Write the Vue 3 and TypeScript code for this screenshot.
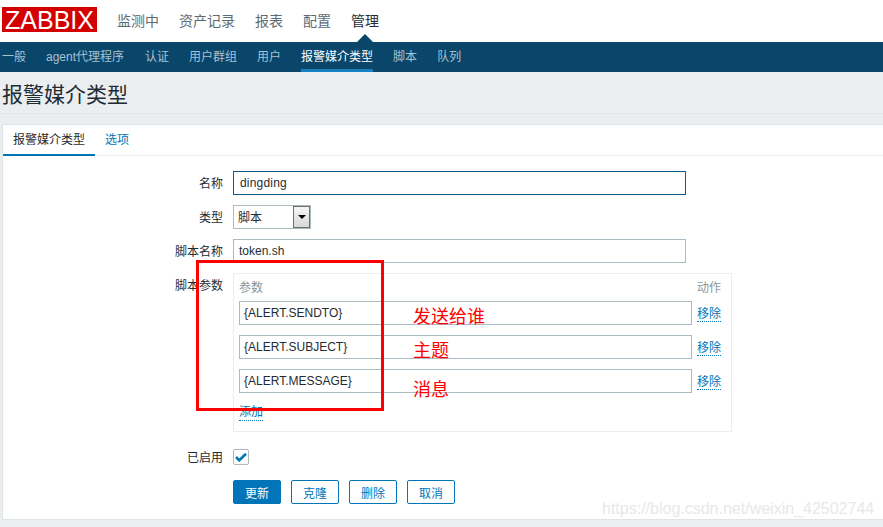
<script setup lang="ts">
const topMenu = ['监测中', '资产记录', '报表', '配置', '管理']
const subMenu = ['一般', 'agent代理程序', '认证', '用户群组', '用户', '报警媒介类型', '脚本', '队列']
const params = ['{ALERT.SENDTO}', '{ALERT.SUBJECT}', '{ALERT.MESSAGE}']
const notes = [
  { text: '发送给谁', top: 306 },
  { text: '主题', top: 340 },
  { text: '消息', top: 379 },
]
</script>

<template>
  <div class="page">
    <header class="top">
      <div class="logo">ZABBIX</div>
      <nav class="top-menu">
        <a v-for="m in topMenu" :key="m" :class="{ active: m === '管理' }">{{ m }}</a>
      </nav>
    </header>
    <nav class="sub-menu">
      <a v-for="m in subMenu" :key="m" :class="{ active: m === '报警媒介类型' }">{{ m }}</a>
    </nav>
    <h1 class="title">报警媒介类型</h1>

    <section class="card">
      <div class="tabs">
        <a class="tab active">报警媒介类型</a>
        <a class="tab">选项</a>
      </div>
      <form class="form" @submit.prevent>
        <label class="lbl">名称</label>
        <div class="input focused name">dingding</div>

        <label class="lbl">类型</label>
        <div class="select">
          <span class="select-text">脚本</span>
          <span class="arrow-btn"><i></i></span>
        </div>

        <label class="lbl">脚本名称</label>
        <div class="input name">token.sh</div>

        <label class="lbl">脚本参数</label>
        <div class="params">
          <div class="params-head"><span>参数</span><span>动作</span></div>
          <div v-for="p in params" :key="p" class="param-row">
            <div class="input param">{{ p }}</div>
            <a class="link">移除</a>
          </div>
          <a class="link add">添加</a>
        </div>

        <label class="lbl enabled">已启用</label>
        <div class="check-wrap enabled">
          <span class="check">
            <svg width="12" height="10" viewBox="0 0 12 10"><path d="M1 5 L4.3 8.3 L11 1.8" fill="none" stroke="#0275b8" stroke-width="2.6" /></svg>
          </span>
        </div>

        <div class="buttons">
          <button class="btn primary">更新</button>
          <button class="btn">克隆</button>
          <button class="btn">删除</button>
          <button class="btn">取消</button>
        </div>
      </form>
    </section>

    <!-- annotations drawn over the screenshot -->
    <div class="red-box"></div>
    <span v-for="n in notes" :key="n.text" class="note" :style="{ top: n.top + 'px' }">{{ n.text }}</span>
    <span class="watermark">https://blog.csdn.net/weixin_42502744</span>
  </div>
</template>

<style>
html, body {
  margin: 0;
  background: #ebeef0;
}
</style>

<style scoped>
.page {
  position: relative;
  width: 883px;
  height: 527px;
  overflow: hidden;
  background: #ebeef0;
  font-family: "Liberation Sans", Arial, "Noto Sans CJK SC", sans-serif;
  font-size: 12px;
  color: #1f2c33;
}
.top {
  height: 42px;
  background: #fff;
  display: flex;
  align-items: flex-start;
  padding-left: 2px;
  box-sizing: border-box;
}
.logo {
  margin-top: 7px;
  width: 95px;
  height: 25px;
  background: #d40000;
  color: #fff;
  font-size: 25px;
  line-height: 26px;
  text-align: center;
}
.top-menu {
  display: flex;
  gap: 20px;
  margin-left: 20px;
  height: 42px;
}
.top-menu a {
  font-size: 14px;
  line-height: 42px;
  color: #5e6a72;
  position: relative;
  height: 42px;
}
.top-menu a.active {
  color: #1f2c33;
}
.top-menu a.active::after {
  content: '';
  position: absolute;
  left: 50%;
  bottom: 0;
  margin-left: -8px;
  border-left: 8px solid transparent;
  border-right: 8px solid transparent;
  border-bottom: 8px solid #0a466a;
}
.sub-menu {
  height: 30px;
  background: #0a466a;
  display: flex;
  gap: 20px;
  padding-left: 2px;
}
.sub-menu a {
  color: #a6c2d3;
  line-height: 31px;
  height: 30px;
  box-sizing: border-box;
  white-space: nowrap;
}
.sub-menu a:nth-child(2) {
  margin-right: 1px;
}
.sub-menu a.active {
  color: #fff;
  border-bottom: 3px solid #1a7fc1;
}
.title {
  margin: 0 0 10px;
  height: 42px;
  padding-left: 2px;
  border-bottom: 1px solid #dfe4e7;
  font-size: 21px;
  font-weight: 400;
  line-height: 45px;
  color: #1f2c33;
  box-sizing: border-box;
}
.card {
  margin-left: 2px;
  height: 396px;
  background: #fff;
  border: 1px solid #dfe4e7;
  border-right: none;
  box-sizing: border-box;
}
.tabs {
  display: flex;
  height: 31px;
  border-bottom: 1px solid #ebeef0;
  box-sizing: border-box;
}
.tab {
  height: 31px;
  padding: 0 10px;
  line-height: 31px;
  color: #0275b8;
  box-sizing: border-box;
}
.tab.active {
  color: #1f2c33;
  border-bottom: 2px solid #0275b8;
}
.form {
  display: grid;
  grid-template-columns: 220px 1fr;
  column-gap: 10px;
  row-gap: 10px;
  padding-top: 15px;
}
.lbl {
  text-align: right;
  line-height: 26px;
  height: 24px;
}
.input {
  height: 24px;
  box-sizing: border-box;
  border: 1px solid #acbbc2;
  background: #fff;
  padding: 0 5px;
  line-height: 23px;
}
.input.name {
  width: 453px;
  color: #1f2c33;
}
.input.focused {
  border-color: #0a5a8c;
  padding-left: 6px;
  letter-spacing: 0.2px;
}
.select {
  width: 78px;
  height: 24px;
  box-sizing: border-box;
  border: 1px solid #acbbc2;
  display: flex;
  justify-content: space-between;
  align-items: center;
  padding-left: 4px;
  line-height: 22px;
}
.select-text {
  padding-top: 2px;
}
.arrow-btn {
  width: 17px;
  height: 22px;
  box-sizing: border-box;
  border: 1px solid #6f6f6f;
  background: linear-gradient(#f6f6f6, #d8d8d8);
  display: flex;
  align-items: center;
  justify-content: center;
}
.arrow-btn i {
  border-left: 4px solid transparent;
  border-right: 4px solid transparent;
  border-top: 4px solid #000;
}
.params {
  width: 499px;
  height: 159px;
  box-sizing: border-box;
  border: 1px solid #ebeef0;
  padding: 6px 10px 0 5px;
}
.params-head {
  display: flex;
  justify-content: space-between;
  color: #8a959b;
  line-height: 16px;
  height: 21px;
}
.param-row {
  display: flex;
  gap: 5px;
  height: 24px;
  margin-bottom: 10px;
  align-items: flex-start;
}
.input.param {
  width: 453px;
  flex: none;
  padding: 0 4px;
  color: #1f2c33;
}
.link {
  color: #0275b8;
  line-height: 26px;
  border-bottom: 1px dotted #0275b8;
  height: 20px;
  white-space: nowrap;
}
.add {
  display: inline-block;
  line-height: 18px;
  height: 17px;
}
.enabled {
  margin-top: 3px;
}
.check-wrap {
  height: 24px;
  display: flex;
  align-items: center;
}
.check {
  width: 16px;
  height: 16px;
  box-sizing: border-box;
  border: 1px solid #acbbc2;
  border-radius: 2px;
  display: flex;
  align-items: center;
  justify-content: center;
}
.buttons {
  grid-column: 2;
  display: flex;
  gap: 10px;
  margin-top: 1px;
}
.btn {
  width: 48px;
  height: 24px;
  box-sizing: border-box;
  border: 1px solid #0275b8;
  border-radius: 2px;
  background: #fff;
  color: #0275b8;
  font: inherit;
  padding: 0;
}
.btn.primary {
  background: #0275b8;
  color: #fff;
}
.red-box {
  position: absolute;
  left: 196px;
  top: 260px;
  width: 188px;
  height: 151px;
  box-sizing: border-box;
  border: 3px solid #f00;
}
.note {
  position: absolute;
  left: 413px;
  color: #f00;
  font-size: 18px;
  line-height: 22px;
}
.watermark {
  position: absolute;
  left: 602px;
  top: 499px;
  font-size: 16px;
  line-height: 20px;
  color: #e6e8ea;
}
</style>
